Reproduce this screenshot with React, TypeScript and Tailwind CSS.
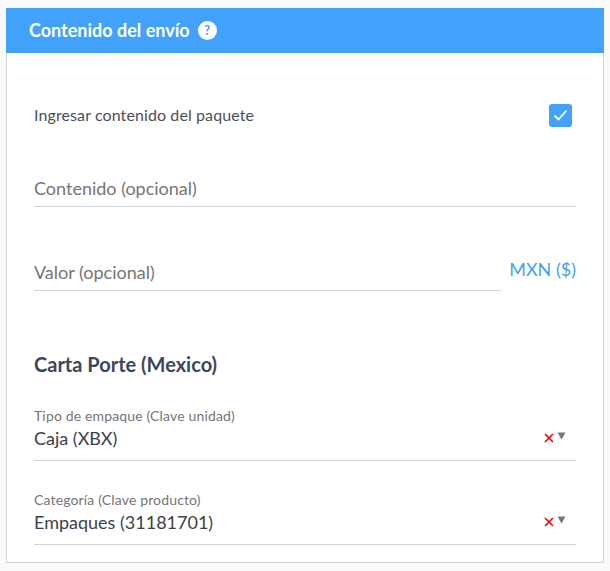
import React from 'react';

const SelectField = ({ label, value }: { label: string; value: string }) => (
  <div className="h-[57px] border-b border-[#ced4da] flex flex-col">
    <div className="text-[14px] leading-[17px] text-[#757575] mt-[3px] tracking-[0.15px]">{label}</div>
    <div className="flex items-start justify-between mt-[2px]">
      <div className="text-[18px] leading-[24px] text-[#3e4148]">{value}</div>
      <div className="flex items-start pr-[10px]">
        <svg width="10" height="10" viewBox="0 0 10 10" className="mt-[7px]">
          <path d="M1 1 L9 9 M9 1 L1 9" stroke="#f00" strokeWidth="1.7" />
        </svg>
        <svg width="9" height="8" viewBox="0 0 9 8" className="ml-[3px] mt-[6px]">
          <path d="M0.5 0.5 H8.5 L4.5 7.5 Z" fill="#777" />
        </svg>
      </div>
    </div>
  </div>
);

export default function App() {
  return (
    <div className="w-[610px] h-[571px] bg-[#fafafa] pt-2 px-[6px] font-['Lato',sans-serif] overflow-hidden">
      <div className="w-[598px] h-[555px] border border-[#ced4da] border-t-0 bg-white">
        <div className="-mx-px h-[45px] bg-[#42a1fb] flex items-center pl-[23px] gap-2">
          <span className="text-[18px] font-bold text-white">Contenido del envío</span>
          <span className="w-[19px] h-[19px] rounded-full bg-white text-[#42a1fb] text-[13px] font-bold flex items-center justify-center">?</span>
        </div>

        <div className="px-[27px]">
          <div className="mt-[50px] flex items-center justify-between h-[24px] pr-[4px]">
            <span className="text-[16px] text-[#4a4f57] tracking-[0.1px]">Ingresar contenido del paquete</span>
            <span className="w-[23px] h-[23px] rounded-[3px] bg-[#42a1fb] flex items-center justify-center">
              <svg width="15" height="12" viewBox="0 0 15 12" fill="none">
                <path d="M1.5 6.5 L5.5 10.5 L13.5 1.5" stroke="#fff" strokeWidth="1.8" />
              </svg>
            </span>
          </div>

          <div className="mt-[36px] h-[44px] border-b border-[#ced4da] flex items-end pb-[4px] text-[18px] text-[#757575]">
            Contenido (opcional)
          </div>

          <div className="mt-[40px] flex items-start justify-between">
            <div className="w-[467px] h-[44px] border-b border-[#ced4da] flex items-end pb-[4px] text-[18px] text-[#757575]">
              Valor (opcional)
            </div>
            <span className="text-[18px] leading-[24px] mt-[10px] text-[#42a1fb]">MXN ($)</span>
          </div>

          <h2 className="mt-[59px] text-[20px] leading-[28px] font-bold text-[#3d4759]">Carta Porte (Mexico)</h2>

          <div className="mt-[26px] flex flex-col gap-[27px]">
            <SelectField label="Tipo de empaque (Clave unidad)" value="Caja (XBX)" />
            <SelectField label="Categoría (Clave producto)" value="Empaques (31181701)" />
          </div>
        </div>
      </div>
    </div>
  );
}
